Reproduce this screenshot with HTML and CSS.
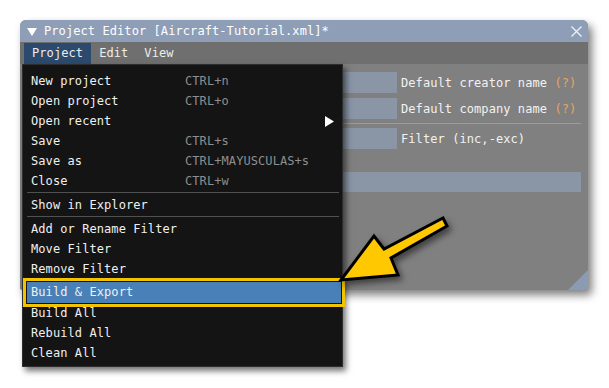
FILE: index.html
```html
<!DOCTYPE html>
<html>
<head>
<meta charset="utf-8">
<link rel="stylesheet" href="styles.css">
</head>
<body>
<div class="window">
  <div class="titlebar">
    <svg class="collapse" width="10" height="8" viewBox="0 0 10 8"><polygon points="0,0 10,0 5,8" fill="#ffffff"/></svg>
    <span class="title">Project Editor [Aircraft-Tutorial.xml]*</span>
    <svg class="close" width="11" height="11" viewBox="0 0 11 11"><path d="M0.5 0.5 L10.5 10.5 M10.5 0.5 L0.5 10.5" stroke="#eef1f6" stroke-width="1.3" fill="none"/></svg>
  </div>
  <div class="menubar">
    <span class="menu active">Project</span>
    <span class="menu">Edit</span>
    <span class="menu">View</span>
  </div>
  <div class="content">
    <div class="row"><div class="input"></div><span class="label">Default creator name <span class="help">(?)</span></span></div>
    <div class="row"><div class="input"></div><span class="label">Default company name <span class="help">(?)</span></span></div>
    <div class="hsep"></div>
    <div class="row"><div class="input"></div><span class="label">Filter (inc,-exc)</span></div>
    <div class="wide"></div>
  </div>
  <div class="grip"></div>
  <div class="dropdown">
    <div class="item"><span class="name">New project</span><span class="key">CTRL+n</span></div>
    <div class="item"><span class="name">Open project</span><span class="key">CTRL+o</span></div>
    <div class="item"><span class="name">Open recent</span><svg class="sub" width="9" height="11" viewBox="0 0 9 11"><polygon points="0,0 9,5.5 0,11" fill="#ffffff"/></svg></div>
    <div class="item"><span class="name">Save</span><span class="key">CTRL+s</span></div>
    <div class="item"><span class="name">Save as</span><span class="key">CTRL+MAYUSCULAS+s</span></div>
    <div class="item"><span class="name">Close</span><span class="key">CTRL+w</span></div>
    <div class="sep"></div>
    <div class="item"><span class="name">Show in Explorer</span></div>
    <div class="sep"></div>
    <div class="item"><span class="name">Add or Rename Filter</span></div>
    <div class="item"><span class="name">Move Filter</span></div>
    <div class="item"><span class="name">Remove Filter</span></div>
    <div class="sep short"></div>
    <div class="item hl"><span class="name">Build &amp; Export</span></div>
    <div class="item"><span class="name">Build All</span></div>
    <div class="item"><span class="name">Rebuild All</span></div>
    <div class="item"><span class="name">Clean All</span></div>
  </div>
</div>
<svg class="arrow" width="609" height="388" viewBox="0 0 609 388">
  <polygon points="341,280 374,236 384,249 443,218 447,226 391,258 398,275" fill="#ffc800" stroke="#000000" stroke-width="3" stroke-linejoin="miter" stroke-miterlimit="6"/>
</svg>
</body>
</html>
```
FILE: styles.css
```css
html, body {
  margin: 0;
  padding: 0;
  background: #ffffff;
}
body {
  width: 609px;
  height: 388px;
  position: relative;
  overflow: hidden;
  padding: 20px 0 0 20px;
  box-sizing: border-box;
  font-family: "DejaVu Sans Mono", "Liberation Mono", monospace;
  font-size: 12px;
  letter-spacing: 0.08px;
  color: #f0f0f0;
}
.window {
  position: relative;
  width: 568px;
  height: 270px;
  background: #808080;
  border-radius: 6px 6px 4px 2px;
  box-shadow: 4px 5px 9px rgba(0, 0, 0, 0.5);
  display: flex;
  flex-direction: column;
}
.titlebar {
  height: 22px;
  flex: none;
  background: #8e9eb7;
  border-radius: 6px 6px 0 0;
  display: flex;
  align-items: center;
  padding: 0 0 0 7px;
  color: #ffffff;
}
.collapse {
  flex: none;
  margin-top: 1px;
}
.title {
  margin-left: 7px;
  flex: 1;
  line-height: 22px;
}
.close {
  flex: none;
  margin-right: 6px;
  margin-top: 1px;
}
.menubar {
  height: 22px;
  flex: none;
  background: #6f6f6f;
  display: flex;
  align-items: stretch;
  padding-left: 4px;
}
.menu {
  padding: 0 8px;
  line-height: 21px;
  margin-top: 1px;
  color: #ececec;
}
.menu.active {
  background: #2c4a6e;
}
.content {
  flex: 1;
  padding: 8px 7px 0 8px;
  display: flex;
  flex-direction: column;
}
.row {
  display: flex;
  align-items: center;
  height: 21px;
  margin-bottom: 5px;
}
.input {
  width: 369px;
  height: 21px;
  background: #8a96a6;
  flex: none;
}
.label {
  margin-left: 4px;
  white-space: nowrap;
  color: #f2f2f2;
}
.help {
  color: #e5a560;
}
.hsep {
  height: 1px;
  background: #9c9c9c;
  margin: -1px 0 4px 0;
}
.wide {
  height: 20px;
  background: #8a96a6;
  margin-top: 18px;
}
.grip {
  position: absolute;
  right: 0;
  bottom: 0;
  width: 20px;
  height: 20px;
  background: #8b9bb3;
  clip-path: polygon(100% 0, 100% 100%, 0 100%);
  border-bottom-right-radius: 4px;
}
.dropdown {
  position: absolute;
  left: 2px;
  top: 44px;
  width: 321px;
  box-sizing: border-box;
  background: #141414;
  border: 1px solid #2e2e2e;
  padding: 6px 0 3px 0;
  box-shadow: 3px 4px 6px rgba(0, 0, 0, 0.55);
  display: flex;
  flex-direction: column;
}
.item {
  height: 20px;
  line-height: 20px;
  display: flex;
  align-items: center;
  padding-left: 8px;
  color: #f0f0f0;
  white-space: nowrap;
}
.name {
  width: 154px;
  flex: none;
}
.key {
  color: #8e8e8e;
}
.sub {
  margin-left: 140px;
}
.sep {
  height: 1px;
  background: #505050;
  margin: 1px 3px 2px 4px;
}
.sep.short {
  margin: 1px 3px 1px 4px;
}
.item.hl {
  height: 21px;
  line-height: 21px;
  background: #4a80b8;
  margin: 0 1px 0 4px;
  padding-left: 4px;
  outline: 3px solid #f4c300;
  outline-offset: 1px;
  position: relative;
}
.arrow {
  position: absolute;
  left: 0;
  top: 0;
  filter: drop-shadow(3px 4px 3px rgba(0, 0, 0, 0.5));
}
```
